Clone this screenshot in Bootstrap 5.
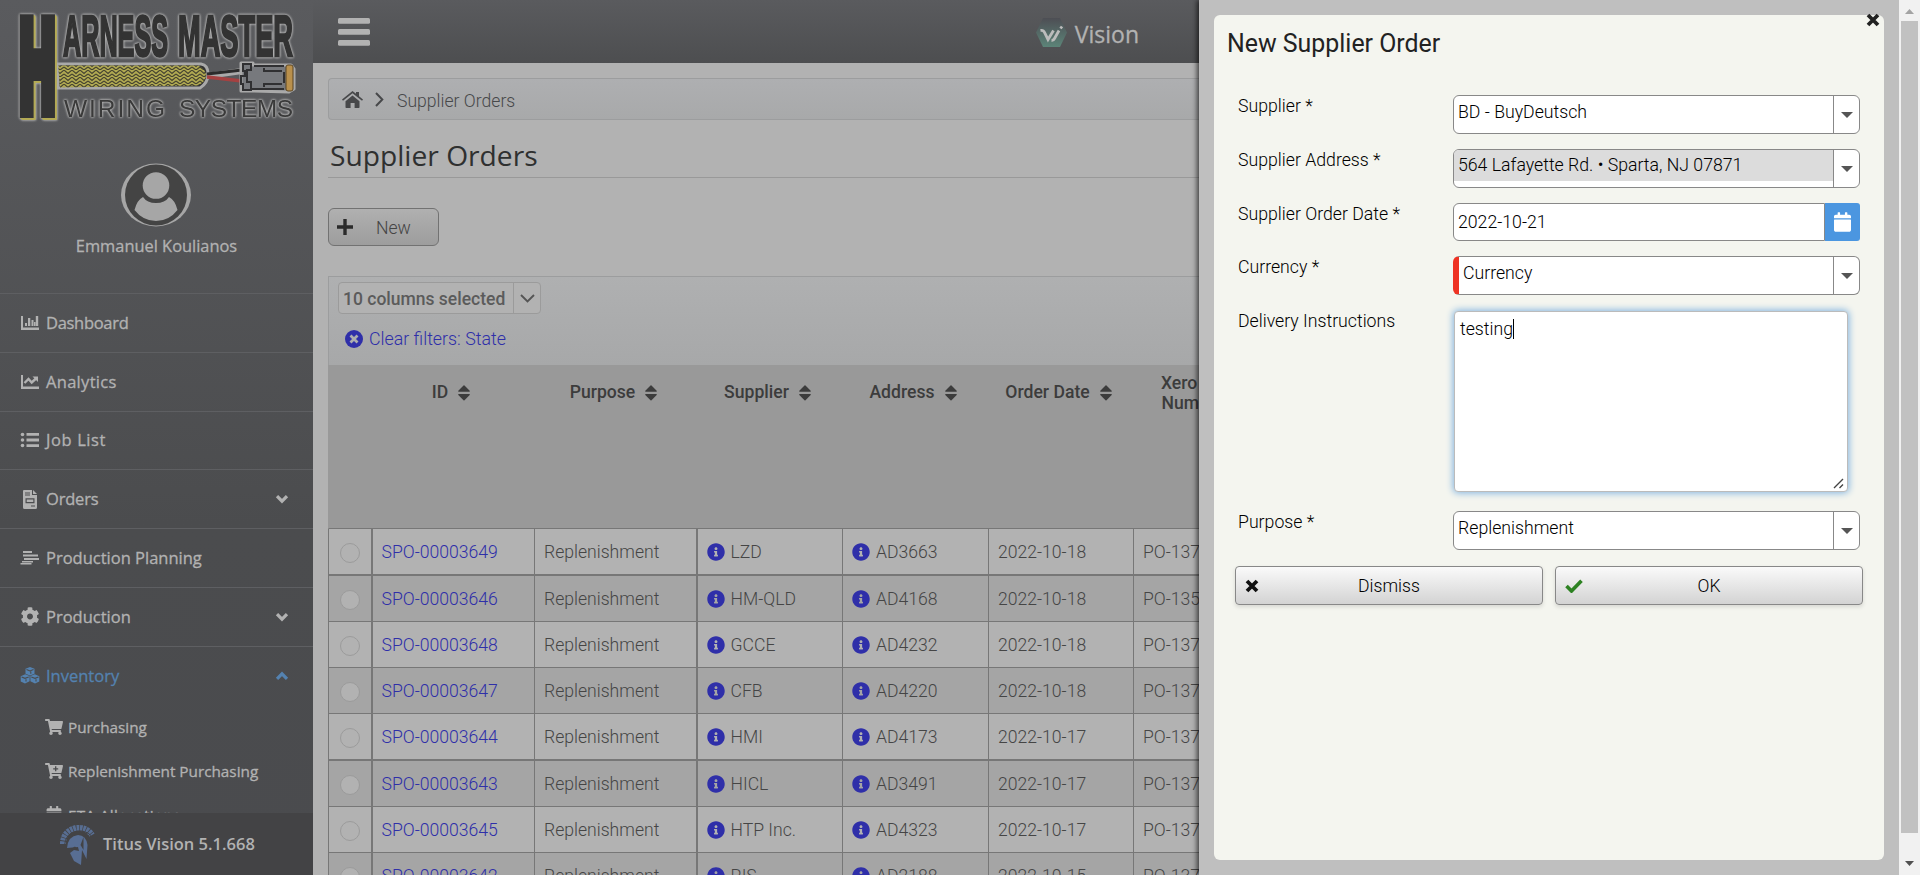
<!DOCTYPE html>
<html lang="en">
<head>
<meta charset="utf-8">
<title>Supplier Orders</title>
<link href="https://cdn.jsdelivr.net/npm/bootstrap@5.3.0/dist/css/bootstrap.min.css" rel="stylesheet">
<style>
html,body{height:100%;overflow:hidden}
body{font-family:Roboto,"Liberation Sans",sans-serif;font-size:17.6px;font-weight:300;line-height:24px;background:#b2b2b2;color:#454545}
svg{display:block;flex:none}
.fi{fill:currentColor}
.hum{font-family:"Open Sans","Noto Sans",sans-serif;font-weight:500}
/* sidebar */
.side{width:313px;height:875px;background:linear-gradient(#5a5b5e,#4b4c4e 60%,#4a4b4e);color:#b2b2b2;flex:none}
.side .hum{-webkit-text-stroke:.3px currentColor}
.brandbox{height:145px}
.logo-h{filter:drop-shadow(1.500px 1.500px 0 #b3aa55) drop-shadow(1.500px 1.500px 0 #b3aa55) drop-shadow(0 0 1px #b4b4b4) drop-shadow(0 0 1px #a0a0a0)}
.logo-t{filter:drop-shadow(0 0 1px #b8b8b8) drop-shadow(0 0 1px #b0b0b0)}
.profile{height:148px;padding:18px 2px 0 0}
.profile .hum{font-size:16.400px;margin:7px 0 0 2px}
.menu-row{height:58.8px;border-top:1px solid #5e5f62;padding:0 24px 0 20px;font-size:16.5px}
.menu-row svg.fi{margin-right:6px}
.menu-row svg.chev{margin:0 0 0 auto}
.menu-row.active{color:#5482b0}
.menu-main{height:520px;overflow:hidden}
.sub-row{height:44px;padding-left:45px;font-size:15.300px}
.sub-row svg{margin-right:5px}
.side-foot{height:62px;background:#434345;padding-left:59px;font-size:16.5px;font-weight:600}
.side .side-foot.hum{-webkit-text-stroke:0}
/* main */
.main-col{width:886px;height:875px;overflow:hidden;flex:none}
.topbar{height:63px;background:linear-gradient(#5a5b5e,#4d4e50);padding:0 60px 0 25px;color:#b2b2b2}
.topbar .hum{font-size:23px;-webkit-text-stroke:.3px currentColor}
.body-pad{padding:15px 0 0 15px}
.crumbs{height:42px;border:1px solid #9c9d9e;border-right:0;border-radius:4px 0 0 4px;background:linear-gradient(#aeafb1,#a8a9aa);padding-left:13px;color:#47484a}
.crumbs span{padding-top:3px}
.page-title{height:58px;padding:18px 0 0 2px;border-bottom:1px solid #999;font-size:28.200px;line-height:34px;font-weight:400;color:#2f3030}
.btn-new{width:111px;height:38px;margin-top:30px;border:1px solid #727272;border-radius:6px;background:linear-gradient(#b0b0b0,#9d9d9d);padding:0 9px 0 8px;color:#444}
.panel{height:89px;margin-top:30px;border:1px solid #9c9d9e;border-width:1px 0 0 1px;background:linear-gradient(#afb0b1,#a7a8a9);padding:5px 0 0 9px}
.colsel{width:203px;height:32px;border:1px solid #9b9b9b;border-radius:4px;background:#b2b2b2;font-weight:500;font-size:17.500px;color:#5b5b5b}
.colsel>span:first-child{padding-top:2px}
.colsel .arrow{width:27px;height:30px;border-left:1px solid #9b9b9b}
.clearf{color:#2f2fa9;height:24px;margin-top:13px;padding-left:7px;font-size:17.800px}
.grid-row{display:grid;grid-template-columns:44px 162px 163px 145px 146px 145px 146px;width:951px;border-left:1px solid #777}
.thead-row{height:164px;background:#999;border-left:1px solid #999;border-bottom:1px solid #777;font-weight:500;color:#3c3c3c;line-height:20px;text-align:center}
.thead-row>div{padding:17px 6px 0 0;display:flex;justify-content:center;align-items:flex-start;gap:10px;height:60px}
.thead-row svg{margin-top:3px}
.drow{height:46px;border-bottom:1px solid #777}
.drow.thick{height:47px;border-bottom-width:2px}
.drow.alt{background:#a5a5a5}
.drow>div{border-right:1px solid #777;padding:1px 0 0 9px;display:flex;align-items:center;white-space:nowrap}
.drow>div:nth-child(1),.drow>div:nth-child(3){border-right-width:2px}
.drow>div:nth-child(1){padding:3px 0 0 11px}
.drow>div:nth-child(2){color:#2f2fa9;padding-left:8.500px}
.drow>div:nth-child(4){padding-left:8.500px}
.drow svg{color:#2f2fa9;margin:-1px 6px 0 0}
.rad{width:20px;height:20px;border:1px solid #9b9b9b;border-radius:50%;background:#b2b2b2}
/* drawer */
.drawer{width:700px;height:875px;background:#bfbfbf;padding:15px;box-shadow:-2px 0 5px rgba(0,0,0,.65);position:relative;z-index:2;flex:none;font-weight:400;color:#2c2c2c}
.sheet{height:845px;background:#f4f5ef;border-radius:6px;position:relative}
.sheet h1{font-size:24.900px;line-height:30px;font-weight:400;margin:0;padding:14px 0 0 13px;height:80px;color:#222}
.closex{position:absolute;right:4px;top:-2px;color:#222}
.frow{padding-left:24px;height:54px;font-weight:300;font-size:17.700px;color:#000}
.frow>label{width:215px;line-height:22px}
.fld{width:407px;height:39px;border:1px solid #888;border-radius:6px;background:#fff;overflow:hidden;line-height:33px}
.fld .val{padding-left:4px;flex:1}
.fld .dd{width:26px;border-left:1px solid #888;padding:0 0 0 7px}
.fld.filled .val{background:#dcdcdc;height:31px;line-height:31px}
.fld.need{border-left:6px solid #ee3324}
.calbtn{width:35px;background:#4b96e0;color:#fff;padding:9px 0 0 9px;border-radius:0 3px 3px 0}
.ta{width:394px;height:181px;margin:1px 0 0 1px;border:1px solid #bbb;border-radius:4px;background:#fff;box-shadow:0 0 7px 1px #82b4e0;padding:5px;position:relative}
.ta svg{position:absolute;right:3px;bottom:2px}
.caret{border-right:1px solid #000}
.btn-act{width:308px;height:39px;border:1px solid #888;border-radius:4px;background:linear-gradient(#fafafa,#d3d3d3);box-shadow:0 2px 4px rgba(0,0,0,.12);font-weight:300;color:#000;padding:0 9px}
.btn-act span{padding-top:1px}
.sbar{width:21px;height:875px;background:#f1f1f1;flex:none;z-index:3;padding:0 2px}
.sbar .thumb{height:812px;background:#c1c1c1;width:17px}
</style>
</head>
<body>
<svg width="0" height="0" class="position-absolute">
<symbol id="info" viewBox="0 0 512 512"><path d="M256 8C119.043 8 8 119.083 8 256c0 136.997 111.043 248 248 248s248-111.003 248-248C504 119.083 392.957 8 256 8zm0 110c23.196 0 42 18.804 42 42s-18.804 42-42 42-42-18.804-42-42 18.804-42 42-42zm56 254c0 6.627-5.373 12-12 12h-88c-6.627 0-12-5.373-12-12v-24c0-6.627 5.373-12 12-12h12v-64h-12c-6.627 0-12-5.373-12-12v-24c0-6.627 5.373-12 12-12h64c6.627 0 12 5.373 12 12v100h12c6.627 0 12 5.373 12 12v24z"/></symbol>
<symbol id="cart" viewBox="0 0 576 512"><path d="M528.12 301.319l47.273-208C578.806 78.301 567.391 64 551.99 64H159.208l-9.166-44.81C147.758 8.021 137.93 0 126.529 0H24C10.745 0 0 10.745 0 24v16c0 13.255 10.745 24 24 24h69.883l70.248 343.435C147.325 417.1 136 435.222 136 456c0 30.928 25.072 56 56 56s56-25.072 56-56c0-15.674-6.447-29.835-16.824-40h209.647C430.447 426.165 424 440.326 424 456c0 30.928 25.072 56 56 56s56-25.072 56-56c0-22.172-12.888-41.332-31.579-50.405l5.517-24.276c3.413-15.018-8.002-29.319-23.403-29.319H218.117l-6.545-32h293.145c11.206 0 20.92-7.754 23.403-18.681z"/></symbol>
<symbol id="cal" viewBox="0 0 448 512"><path d="M12 192h424c6.6 0 12 5.4 12 12v260c0 26.500-21.500 48-48 48H48c-26.500 0-48-21.500-48-48V204c0-6.600 5.400-12 12-12zm436-44v-36c0-26.500-21.500-48-48-48h-48V12c0-6.600-5.400-12-12-12h-40c-6.600 0-12 5.400-12 12v52H160V12c0-6.600-5.400-12-12-12h-40c-6.600 0-12 5.400-12 12v52H48C21.500 64 0 85.500 0 112v36c0 6.600 5.400 12 12 12h424c6.600 0 12-5.400 12-12z"/></symbol>
<symbol id="cog" viewBox="0 0 512 512"><path d="M487.400 315.700l-42.600-24.600c4.300-23.200 4.300-47 0-70.200l42.600-24.600c4.900-2.800 7.100-8.600 5.500-14-11.100-35.600-30-67.800-54.700-94.600-3.800-4.100-10-5.100-14.800-2.300L380.800 110c-17.900-15.400-38.500-27.300-60.800-35.100V25.800c0-5.600-3.900-10.500-9.400-11.700-36.700-8.200-74.300-7.800-109.200 0-5.500 1.200-9.400 6.100-9.400 11.700V75c-22.200 7.900-42.800 19.800-60.800 35.100L88.700 85.500c-4.900-2.800-11-1.900-14.800 2.300-24.700 26.700-43.600 58.900-54.700 94.600-1.700 5.400.6 11.200 5.500 14L67.300 221c-4.300 23.200-4.300 47 0 70.200l-42.600 24.600c-4.900 2.800-7.100 8.600-5.500 14 11.100 35.600 30 67.800 54.700 94.600 3.800 4.100 10 5.100 14.800 2.300l42.600-24.600c17.900 15.400 38.500 27.300 60.800 35.100v49.200c0 5.600 3.900 10.500 9.400 11.700 36.700 8.200 74.300 7.800 109.200 0 5.500-1.200 9.400-6.100 9.400-11.700v-49.200c22.200-7.900 42.800-19.800 60.800-35.100l42.600 24.600c4.900 2.800 11 1.900 14.800-2.300 24.700-26.700 43.600-58.900 54.700-94.600 1.500-5.500-.7-11.300-5.600-14.100zM256 336c-44.100 0-80-35.900-80-80s35.900-80 80-80 80 35.900 80 80-35.900 80-80 80z"/></symbol>
<symbol id="sort" viewBox="0 0 12 16"><path d="M.7 6.700h10.600c.5 0 .7-.5.4-.9L6.500.5a.7.7 0 0 0-1 0L.3 5.800c-.3.400-.1.900.400.900zM.7 9.100h10.600c.5 0 .7.500.4.900L6.500 15.300a.7.7 0 0 1-1 0L.3 10c-.3-.4-.1-.9.400-.9z"/></symbol>
<symbol id="down" viewBox="0 0 14 10"><path d="M2 2.200l5 5 5-5" fill="none" stroke="currentColor" stroke-width="3.200"/></symbol>
<symbol id="xx" viewBox="0 0 14 14"><path d="M2 2l10 10M12 2L2 12" fill="none" stroke="currentColor" stroke-width="3.800"/></symbol>
<symbol id="tri" viewBox="0 0 12 6"><path d="M0 0h12L6 6z"/></symbol>
</svg>
<div class="d-flex">
<aside class="side d-flex flex-column">
  <div class="brandbox">
    <svg width="313" height="145" viewBox="0 0 313 145">
      <defs><pattern id="braid" width="8" height="7" patternUnits="userSpaceOnUse"><rect width="8" height="7" fill="#b0a951"/><path d="M0 0l4 3.500L8 0M0 4l4 3 4-3" stroke="#45432f" stroke-width="1.100" fill="none"/></pattern></defs>
      <path d="M58 64h143q7 1 7 10t-8 14H58z" fill="#333" stroke="#a9a9a9" stroke-width="3"/>
      <path d="M58 65.500h140q8 4 8 10t-8 10l-138 2z" fill="url(#braid)"/>
      <g fill="none"><path d="M207 76l35-5" stroke="#aaa" stroke-width="6"/><path d="M207 74l35-4" stroke="#2b2b2b" stroke-width="3"/><path d="M207 77l35 4" stroke="#a54141" stroke-width="3.500"/></g>
      <path d="M241 63h12v2h38l3 4v20l-5 3-36-1h-12z" fill="#77797d" stroke="#a9a9a9" stroke-width="3" stroke-linejoin="round"/>
      <path d="M243 64h8v6h-4v12h4v8h-8v-6h-2v-8h4v-5h-2zM254 66h30M252 89h32M264 68v3h18M264 87v-3h18M284 72v11" fill="none" stroke="#303032" stroke-width="2"/>
      <rect x="286" y="65" width="7" height="26" rx="2" fill="#b9904c" stroke="#5b4523"/>
      <g font-family="Liberation Sans" font-weight="700" fill="#333" stroke="#333">
        <g class="logo-h"><text font-size="125" transform="translate(20 109) scale(.385 1)" stroke-width="18">H</text></g>
        <g class="logo-t" font-size="58" stroke-width="2.600"><text x="63" y="55.500" textLength="105" lengthAdjust="spacingAndGlyphs">ARNESS</text><text x="178" y="55.500" textLength="115" lengthAdjust="spacingAndGlyphs">MASTER</text></g>
      </g>
      <g class="logo-t" font-family="Liberation Sans" font-size="24.500" fill="#3a3a3a"><text x="64" y="116.500" textLength="101">WIRING</text><text x="179" y="116.500" textLength="114">SYSTEMS</text></g>
    </svg>
  </div>
  <div class="profile d-flex flex-column align-items-center">
    <svg width="70" height="64" viewBox="0 0 70 64"><ellipse cx="35" cy="32" rx="35" ry="31.500" fill="#a6a6a6"/><ellipse cx="35" cy="32" rx="31" ry="30.500" fill="#444"/><circle cx="35" cy="22.500" r="13.300" fill="#a6a6a6"/><path d="M22 34q4 6 13 6t13-6q6 3 8.500 13Q48 58 35 58T13.500 47Q16 37 22 34z" fill="#a6a6a6"/></svg>
    <div class="hum">Emmanuel Koulianos</div>
  </div>
  <nav class="menu-main">
    <div class="menu-row hum d-flex align-items-center" style="letter-spacing:-.3px"><svg class="fi" width="20" height="16" viewBox="0 0 20 16"><path d="M1 1h2v11.500h16V15H1zM5 8h2v3H5zM8 3h2.300v8H8zM11.500 5h2v6h-2zM14 7h1.500v4H14zM15.800 1h2.400v10h-2.400z"/></svg>Dashboard</div>
    <div class="menu-row hum d-flex align-items-center" style="letter-spacing:.3px"><svg class="fi" width="20" height="16" viewBox="0 0 20 16"><path d="M1 1h2v11.500h16V15H1z"/><path d="M4.500 9l4-4 3.200 3.500L16 4.500" fill="none" stroke="currentColor" stroke-width="2.400"/><path d="M12.500 2.500H18V8z"/></svg>Analytics</div>
    <div class="menu-row hum d-flex align-items-center" style="letter-spacing:.6px"><svg class="fi" width="20" height="16" viewBox="0 0 20 16"><circle cx="2.500" cy="2.500" r="1.800"/><circle cx="2.500" cy="8" r="1.800"/><circle cx="2.500" cy="13.500" r="1.800"/><path d="M6.500 1h12.500v2.800H6.500zM6.500 6.600h12.500v2.800H6.500zM6.500 12.200h12.500V15H6.500z"/></svg>Job List</div>
    <div class="menu-row hum d-flex align-items-center" style="letter-spacing:-.2px"><svg class="fi" width="20" height="19" viewBox="0 0 20 19"><path fill-rule="evenodd" d="M4 0h8v5h5v12.500q0 1.500-1.500 1.500h-11Q3 19 3 17.500V1q0-1 1-1zM5 2.500v1h5v-1zm0 2v1h5v-1zM5.500 8.300v5h9v-5zm1.200 1.200h6.600v2.600H6.700zM11 15.500v1h4v-1zM13 0l4 4h-4z"/></svg>Orders<svg class="chev" width="14" height="10"><use href="#down"/></svg></div>
    <div class="menu-row hum d-flex align-items-center"><svg class="fi" width="20" height="16" viewBox="0 0 20 16"><path d="M3 1h9v2H3zM3 4.500h15v2H3zM4 8h15v2H4zM2 11h11v1.400H2zM.5 13h11v1.600H.5z"/></svg>Production Planning</div>
    <div class="menu-row hum d-flex align-items-center"><svg class="fi" width="20" height="19"><use href="#cog"/></svg>Production<svg class="chev" width="14" height="10"><use href="#down"/></svg></div>
    <div class="menu-row active hum d-flex align-items-center"><svg class="fi" width="20" height="17" viewBox="0 0 20 17"><path d="M10 0l4.500 1.700v5L10 8.500 5.500 6.700v-5zM5.200 7.300l4.400 1.800v5.200L5 16.500.7 14.600V9.200zM14.800 7.300l4.500 1.900v5.400L15 16.500l-4.600-2.200V9.100z"/><path d="M6.500 2.600L10 4l3.500-1.400M1.600 9.900L5 11.300l3.700-1.400M11.300 9.900l3.700 1.400 3.500-1.400M10.800 6.800V4.600M6 14.600v-2.300M16 14.600v-2.300" fill="none" stroke="#4b4c4e" stroke-width="1.100"/></svg>Inventory<svg class="chev" width="14" height="10" style="transform:rotate(180deg)"><use href="#down"/></svg></div>
    <div class="sub-row hum d-flex align-items-center"><svg class="fi" width="18" height="16"><use href="#cart"/></svg>Purchasing</div>
    <div class="sub-row hum d-flex align-items-center"><svg class="fi" width="18" height="16" viewBox="0 0 18 16"><use href="#cart" width="18" height="16"/><path d="M10.700 3.300v5M8.200 5.800h5" stroke="#4b4c4e" stroke-width="1.300"/></svg>Replenishment Purchasing</div>
    <div class="sub-row hum d-flex align-items-center" style="letter-spacing:.3px"><svg class="fi" width="18" height="17"><use href="#cal"/></svg>ETA Allocations</div>
  </nav>
  <div class="side-foot hum d-flex align-items-center">
    <svg width="36" height="42" viewBox="0 0 36 42" class="me-2"><path d="M4 21Q4 8 17 5q11-1 16 7" fill="none" stroke="#586e93" stroke-width="6" stroke-dasharray="2.600 .7"/><path d="M5.500 23Q6 10 18 8q8-1 14 4.500" fill="none" stroke="#434345" stroke-width="1"/><path d="M8 25Q9 13 19 12q8 0 9.500 10l-1 14-4.500-9-1 15-7-4-4-8 4-3 5 1-1-4z" fill="#586e93"/><path d="M12 26l7 1-3-3.500zM24.500 14l-3 8 3 5" fill="#434345"/></svg>
    <span>Titus Vision 5.1.668</span>
  </div>
</aside>
<main class="main-col">
  <header class="topbar d-flex align-items-center justify-content-between">
    <svg width="32" height="28" viewBox="0 0 32 28" class="fi"><rect width="32" height="5.700" rx="1.500"/><rect y="11" width="32" height="5.700" rx="1.500"/><rect y="22" width="32" height="5.700" rx="1.500"/></svg>
    <div class="d-flex align-items-center hum" style="padding-top:5px"><svg width="31" height="29" viewBox="0 0 31 29" style="margin:-3px 8px 0 0"><defs><linearGradient id="hex" x2="0" y2="1"><stop offset="0" stop-color="#4d4e54"/><stop offset="1" stop-color="#5c8478"/></linearGradient></defs><path d="M7 0h17l7 14.500L24 29H7L0 14.500z" fill="url(#hex)"/><path d="M4.500 12.500q3-.500 4 2l3.500 7 5.500-9M15.500 22.500q2 0 3-2l4.500-8M24.500 10.500l1.500-2" fill="none" stroke="#bcbcbc" stroke-width="2.800"/></svg><span>Vision</span></div>
  </header>
  <div class="body-pad">
    <div class="crumbs d-flex align-items-center">
      <svg class="fi" width="21" height="17" viewBox="0 0 21 17"><path d="M10.500 4.500l7 5.800v6q0 .7-.7.700h-4.200v-5h-4v5H4.200q-.7 0-.7-.7v-6zM0 8.500L10.500 0 14 2.800V1h3v4.300l4 3.200-1 1.200-9.500-7.500L1 9.700z"/></svg>
      <svg width="9" height="15" viewBox="0 0 9 15" style="margin:0 13px 0 12px"><path d="M1 1l6.300 6.500L1 14" fill="none" stroke="currentColor" stroke-width="2"/></svg><span>Supplier Orders</span>
    </div>
    <h2 class="page-title hum m-0">Supplier Orders</h2>
    <div class="btn-new d-flex align-items-center"><svg width="16" height="16" viewBox="0 0 16 16"><path d="M8 0v16M0 8h16" stroke="#2b2b2b" stroke-width="3.400"/></svg><span style="margin-left:23px;padding-top:2px">New</span></div>
    <div class="panel">
      <div class="colsel d-flex align-items-center justify-content-between"><span class="ps-1 text-nowrap">10 columns selected</span><span class="arrow d-flex align-items-center justify-content-center"><svg width="15" height="9" viewBox="0 0 15 9"><path d="M1 1l6.500 6.500L14 1" fill="none" stroke="#555" stroke-width="1.900"/></svg></span></div>
      <div class="clearf d-flex align-items-center"><svg class="fi me-1" width="18" height="18" viewBox="0 0 18 18"><circle cx="9" cy="9" r="9"/><path d="M5.500 5.500l7 7M12.500 5.500l-7 7" stroke="#adaeaf" stroke-width="2.800"/></svg><span style="padding-left:2px">Clear filters: State</span></div>
    </div>
    <div class="grid-row thead-row">
      <div></div><div>ID<svg class="fi" width="12" height="16"><use href="#sort"/></svg></div><div>Purpose<svg class="fi" width="12" height="16"><use href="#sort"/></svg></div><div>Supplier<svg class="fi" width="12" height="16"><use href="#sort"/></svg></div><div>Address<svg class="fi" width="12" height="16"><use href="#sort"/></svg></div><div>Order Date<svg class="fi" width="12" height="16"><use href="#sort"/></svg></div><div style="margin-top:-9px"><span>Xero PO<br>Number</span><svg class="fi" width="12" height="16"><use href="#sort"/></svg></div>
    </div>
    <div class="grid-row drow thick"><div><span class="rad"></span></div><div>SPO-00003649</div><div>Replenishment</div><div><svg class="fi" width="18" height="18"><use href="#info"/></svg>LZD</div><div><svg class="fi" width="18" height="18"><use href="#info"/></svg>AD3663</div><div>2022-10-18</div><div>PO-13712</div></div>
    <div class="grid-row drow alt"><div><span class="rad"></span></div><div>SPO-00003646</div><div>Replenishment</div><div><svg class="fi" width="18" height="18"><use href="#info"/></svg>HM-QLD</div><div><svg class="fi" width="18" height="18"><use href="#info"/></svg>AD4168</div><div>2022-10-18</div><div>PO-13590</div></div>
    <div class="grid-row drow"><div><span class="rad"></span></div><div>SPO-00003648</div><div>Replenishment</div><div><svg class="fi" width="18" height="18"><use href="#info"/></svg>GCCE</div><div><svg class="fi" width="18" height="18"><use href="#info"/></svg>AD4232</div><div>2022-10-18</div><div>PO-13711</div></div>
    <div class="grid-row drow alt"><div><span class="rad"></span></div><div>SPO-00003647</div><div>Replenishment</div><div><svg class="fi" width="18" height="18"><use href="#info"/></svg>CFB</div><div><svg class="fi" width="18" height="18"><use href="#info"/></svg>AD4220</div><div>2022-10-18</div><div>PO-13710</div></div>
    <div class="grid-row drow thick"><div><span class="rad"></span></div><div>SPO-00003644</div><div>Replenishment</div><div><svg class="fi" width="18" height="18"><use href="#info"/></svg>HMI</div><div><svg class="fi" width="18" height="18"><use href="#info"/></svg>AD4173</div><div>2022-10-17</div><div>PO-13707</div></div>
    <div class="grid-row drow alt"><div><span class="rad"></span></div><div>SPO-00003643</div><div>Replenishment</div><div><svg class="fi" width="18" height="18"><use href="#info"/></svg>HICL</div><div><svg class="fi" width="18" height="18"><use href="#info"/></svg>AD3491</div><div>2022-10-17</div><div>PO-13706</div></div>
    <div class="grid-row drow"><div><span class="rad"></span></div><div>SPO-00003645</div><div>Replenishment</div><div><svg class="fi" width="18" height="18"><use href="#info"/></svg>HTP Inc.</div><div><svg class="fi" width="18" height="18"><use href="#info"/></svg>AD4323</div><div>2022-10-17</div><div>PO-13708</div></div>
    <div class="grid-row drow alt"><div><span class="rad"></span></div><div>SPO-00003642</div><div>Replenishment</div><div><svg class="fi" width="18" height="18"><use href="#info"/></svg>RIS</div><div><svg class="fi" width="18" height="18"><use href="#info"/></svg>AD2188</div><div>2022-10-15</div><div>PO-13705</div></div>
  </div>
</main>
<section class="drawer">
  <div class="sheet">
    <svg class="closex" width="14" height="14"><use href="#xx"/></svg>
    <h1>New Supplier Order</h1>
    <div class="frow d-flex"><label>Supplier *</label><div class="fld d-flex"><span class="val">BD - BuyDeutsch</span><span class="dd d-flex align-items-center"><svg width="12" height="6" fill="#555"><use href="#tri"/></svg></span></div></div>
    <div class="frow d-flex"><label>Supplier Address *</label><div class="fld filled d-flex"><span class="val">564 Lafayette Rd. • Sparta, NJ 07871</span><span class="dd d-flex align-items-center"><svg width="12" height="6" fill="#555"><use href="#tri"/></svg></span></div></div>
    <div class="frow d-flex" style="height:53px"><label>Supplier Order Date *</label><div class="d-flex" style="width:407px;height:38px"><div class="fld rounded-end-0" style="width:372px;height:38px;line-height:37px"><span class="val d-block">2022-10-21</span></div><span class="calbtn"><svg class="fi" width="17" height="20"><use href="#cal"/></svg></span></div></div>
    <div class="frow d-flex"><label>Currency *</label><div class="fld need d-flex"><span class="val">Currency</span><span class="dd d-flex align-items-center"><svg width="12" height="6" fill="#555"><use href="#tri"/></svg></span></div></div>
    <div class="frow d-flex" style="height:201px"><label>Delivery Instructions</label><div class="ta"><span class="caret">testing</span><svg width="11" height="11" viewBox="0 0 11 11"><path d="M1 10l9-9M6.500 10L10 6.500" stroke="#444" stroke-width="1.400"/></svg></div></div>
    <div class="frow d-flex" style="height:55px"><label>Purpose *</label><div class="fld d-flex"><span class="val">Replenishment</span><span class="dd d-flex align-items-center"><svg width="12" height="6" fill="#555"><use href="#tri"/></svg></span></div></div>
    <div class="d-flex" style="gap:12px;padding-left:21px">
      <div class="btn-act d-flex align-items-center"><svg width="14" height="14" style="color:#111"><use href="#xx"/></svg><span class="flex-fill text-center">Dismiss</span><span style="width:14px"></span></div>
      <div class="btn-act d-flex align-items-center"><svg width="18" height="14" viewBox="0 0 18 14"><path d="M1.500 7l5 5L16.500 1.800" fill="none" stroke="#2d8222" stroke-width="3.600"/></svg><span class="flex-fill text-center">OK</span><span style="width:18px"></span></div>
    </div>
  </div>
</section>
<div class="sbar"><svg width="17" height="21" viewBox="0 0 17 21"><path d="M4 14h9l-4.500-5z" fill="#a3a3a3"/></svg><div class="thumb"></div><svg width="17" height="42" viewBox="0 0 17 42"><path d="M4 28h9l-4.500 5z" fill="#505050"/></svg></div>
</div>
<script src="https://cdn.jsdelivr.net/npm/bootstrap@5.3.0/dist/js/bootstrap.bundle.min.js"></script>
</body>
</html>
